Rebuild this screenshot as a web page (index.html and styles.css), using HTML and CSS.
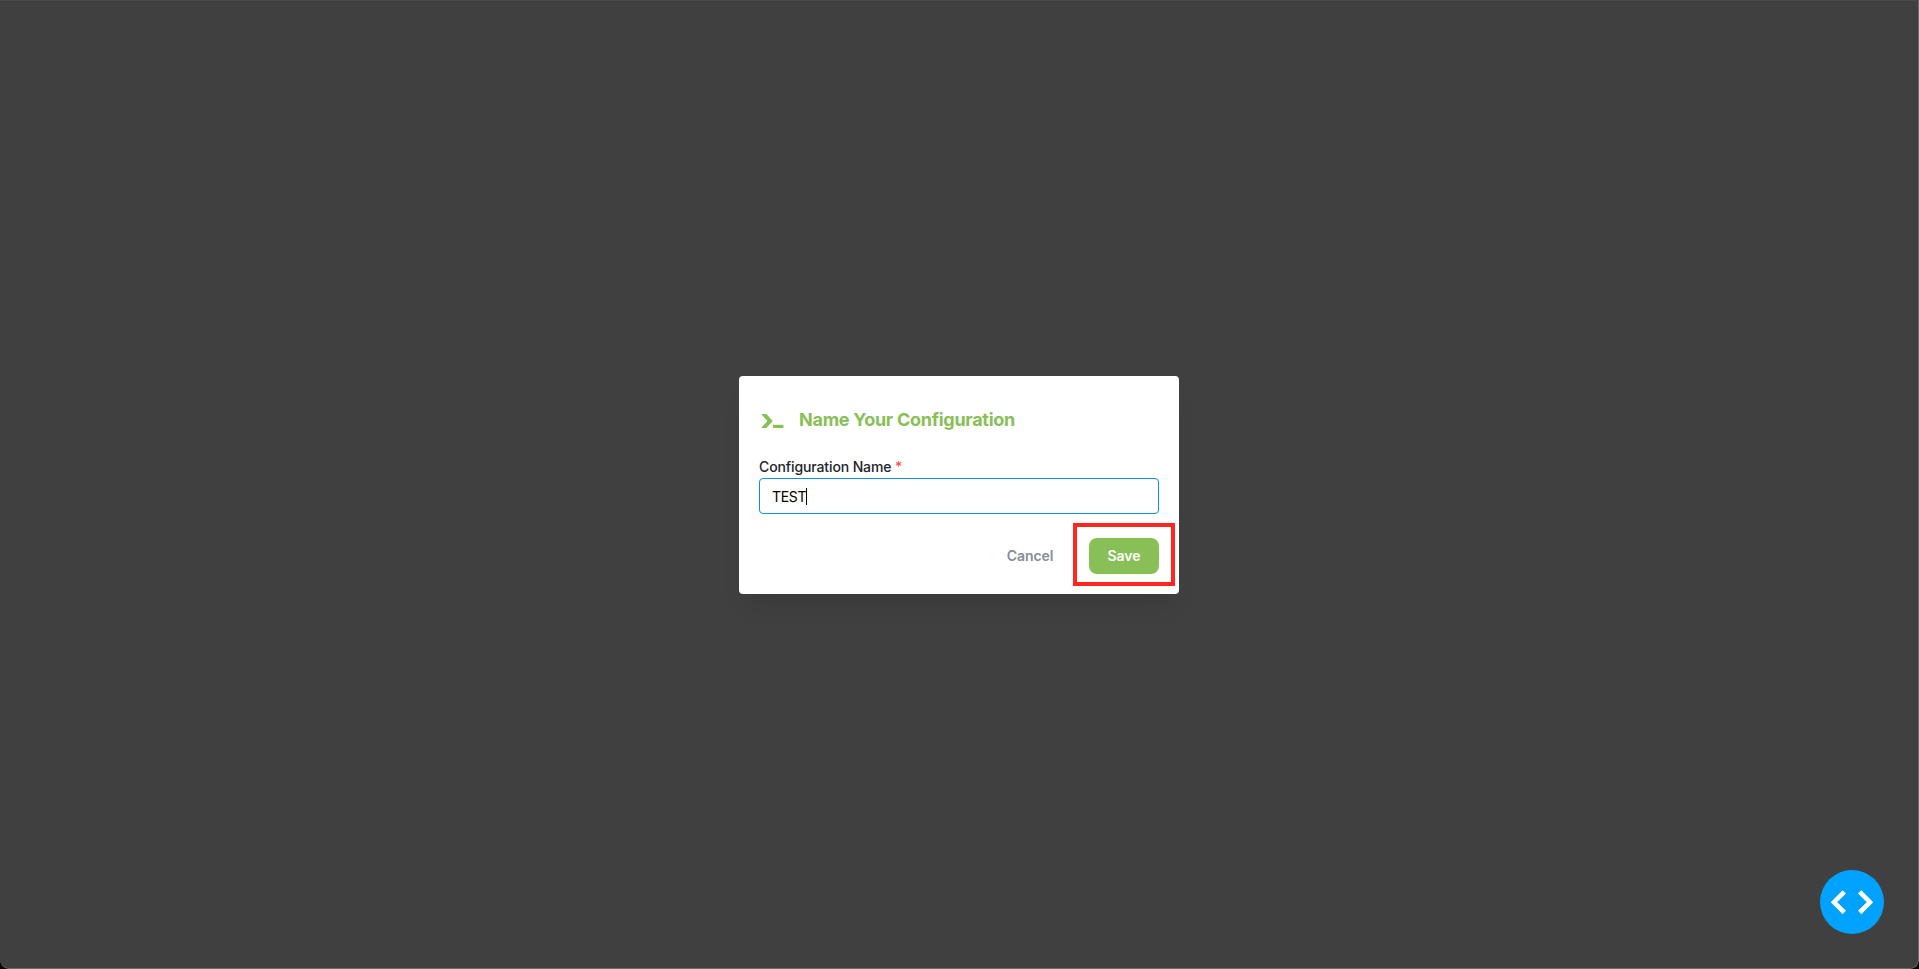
FILE: index.html
```html
<!DOCTYPE html>
<html lang="en">
<head>
<meta charset="utf-8">
<title>Name Your Configuration</title>
<link rel="stylesheet" href="styles.css">
</head>
<body>
<main class="window">
  <form class="modal">
    <header class="modal-header">
      <svg class="prompt-icon" width="25" height="16" viewBox="0 0 25 16" aria-hidden="true"><path d="M2.2 1h5.2l6.4 7-6.4 7H2.2l6.2-7z"/><path d="M14 11.8h10.4v3.2H14z"/></svg>
      <h1 class="modal-title">Name Your Configuration</h1>
    </header>
    <div class="label">Configuration Name <span class="required">*</span></div>
    <div class="field"><span class="value">TEST</span><span class="caret"></span></div>
    <footer class="actions">
      <button class="button cancel" type="button">Cancel</button>
      <button class="button save" type="button">Save</button>
    </footer>
    <div class="highlight"></div>
  </form>
  <button class="code-button" type="button" aria-label="Code">
    <svg width="64" height="64" viewBox="0 0 64 64" fill="none" stroke="#fff" stroke-width="4.6"><path d="M24.3 21.8 14 32.2l10.3 10.3M39.7 21.8 50 32.2 39.7 42.5"/></svg>
  </button>
</main>
</body>
</html>
```
FILE: styles.css
```css
* { box-sizing: border-box; }
body {
  margin: 0;
  background: #050708;
  font-family: Inter, "Liberation Sans", sans-serif;
}
.window {
  position: relative;
  display: flex;
  align-items: flex-start;
  justify-content: center;
  height: 969px;
  padding-top: 375px;
  background: #404040;
  border: 1px solid #4a4a4a;
  border-left: 0;
  border-right-color: #6a6a6a;
  border-bottom-color: #6a6a6a;
  border-radius: 0 0 9px 9px;
}
.modal {
  position: relative;
  width: 440px;
  height: 218px;
  padding: 32px 20px 20px;
  background: #fff;
  border-radius: 4px;
  box-shadow: 0 18px 24px -8px rgba(0, 0, 0, 0.1);
}
.modal-header {
  display: flex;
  align-items: center;
  gap: 15px;
  height: 24px;
}
.prompt-icon {
  width: 25px;
  height: 16px;
  margin-top: 2px;
  fill: #88c057;
}
.modal-title {
  margin: 0;
  color: #88c057;
  font-size: 18px;
  line-height: 24px;
  font-weight: 700;
  letter-spacing: -0.27px;
  white-space: nowrap;
}
.label {
  margin-top: 25px;
  color: #212529;
  font-size: 14px;
  line-height: 20px;
  font-weight: 500;
  letter-spacing: -0.12px;
}
.required { color: #ff4d4f; }
.field {
  display: flex;
  align-items: center;
  height: 36px;
  margin-top: 1px;
  padding-left: 12px;
  border: 1px solid #0a92dd;
  border-radius: 4px;
  color: #000;
  font-size: 14px;
  letter-spacing: -0.3px;
}
.caret {
  width: 1px;
  height: 17px;
  background: #000;
}
.actions {
  display: flex;
  justify-content: flex-end;
  margin-top: 24px;
}
.button {
  height: 36px;
  padding: 0 0 1px;
  border: 0;
  border-radius: 8px;
  font: 600 14px Inter, "Liberation Sans", sans-serif;
}
.cancel {
  width: 82px;
  margin-right: 18px;
  background: transparent;
  color: #868e96;
  letter-spacing: -0.1px;
}
.save {
  width: 70px;
  background: #88c057;
  color: #fff;
}
.highlight {
  position: absolute;
  left: 334px;
  top: 147px;
  width: 102px;
  height: 63px;
  border: 4px solid #ff2520;
}
.code-button {
  position: absolute;
  right: 34px;
  bottom: 34px;
  width: 64px;
  height: 64px;
  padding: 0;
  border: 0;
  border-radius: 50%;
  background: #00a2ff;
}
.code-button svg { display: block; }
```
